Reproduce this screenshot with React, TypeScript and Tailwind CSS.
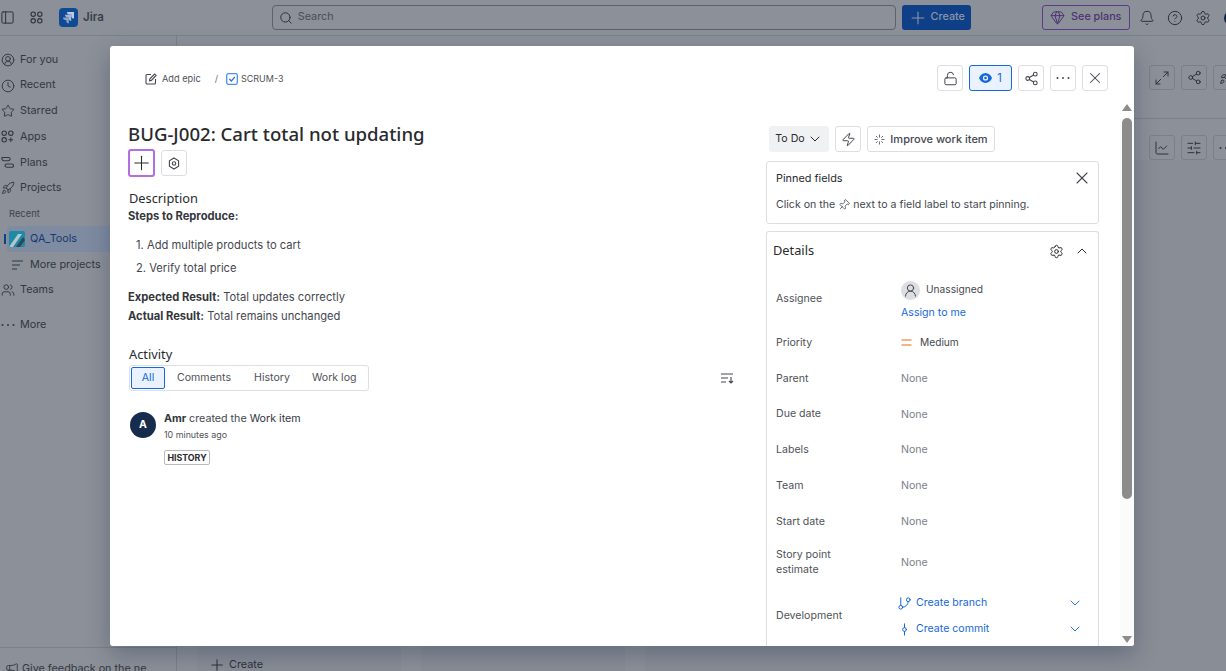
import {
  Bell,
  ChartLine,
  ChevronDown,
  ChevronUp,
  CircleHelp,
  CircleUserRound,
  Clock,
  Gem,
  GitBranch,
  GitCommitVertical,
  LockOpen,
  Maximize2,
  Megaphone,
  PanelLeft,
  Pin,
  Plus,
  Rocket,
  Search,
  Settings,
  Share2,
  SlidersHorizontal,
  Star,
  UserRound,
  Users,
  X,
  Zap,
} from "lucide-react";
import type { ReactNode } from "react";

function DotsIcon() {
  return (
    <svg width="14" height="4" viewBox="0 0 14 4" fill="currentColor">
      <circle cx="1.5" cy="2" r="1" />
      <circle cx="7" cy="2" r="1" />
      <circle cx="12.5" cy="2" r="1" />
    </svg>
  );
}

function AppsIcon({ plus }: { plus?: boolean }) {
  return (
    <svg width="13" height="13" viewBox="0 0 13 13" fill="none" stroke="currentColor" strokeWidth="1.1">
      <circle cx="3.2" cy="3.2" r="2.2" />
      <circle cx="9.8" cy="3.2" r="2.2" />
      <circle cx="3.2" cy="9.8" r="2.2" />
      {plus ? <path d="M9.8 7.5v4.6M7.5 9.8h4.6" /> : <circle cx="9.8" cy="9.8" r="2.2" />}
    </svg>
  );
}

function PlansIcon() {
  return (
    <svg width="13" height="13" viewBox="0 0 13 13" fill="none" stroke="currentColor" strokeWidth="1.1">
      <path d="M1 1.5h6.5a1.6 1.6 0 0 1 0 3.2H2.5A1.6 1.6 0 0 1 1 3.1z" />
      <rect x="4" y="8" width="8.5" height="3.2" rx="1.6" />
    </svg>
  );
}

function JiraLogo() {
  return (
    <div className="w-[19px] h-[19px] rounded-[4px] bg-[#0f4a94] flex items-center justify-center">
      <svg width="13" height="13" viewBox="0 0 13 13" fill="#c9d3e2">
        <path d="M5 1h7v6.5c-1.6 0-2.7-1-2.7-2.6V3.6H7.2C6 3.6 5 2.6 5 1z" opacity="0.95" />
        <path d="M3 3.8h6.2v6.3c-1.5 0-2.6-1-2.6-2.5V6.3H5C3.9 6.3 3 5.3 3 3.8z" opacity="0.8" />
        <path d="M1 6.6h5.8v6c-1.5 0-2.5-1.1-2.5-2.5V9H3.1C1.9 9 1 8 1 6.6z" opacity="0.65" />
      </svg>
    </div>
  );
}

function ProjectLogo() {
  return (
    <svg width="16" height="16" viewBox="0 0 16 16" className="rounded-[2px]">
      <rect width="16" height="16" fill="#1f8aa3" />
      <path d="M0 16 L9 3 L13 3 L4 16Z" fill="#b6c6cf" />
      <path d="M7 16 L14 6 L16 9 L11 16Z" fill="#274a5c" />
    </svg>
  );
}

function HexIcon() {
  return (
    <svg width="12" height="13" viewBox="0 0 12 13" fill="none" stroke="#44474f" strokeWidth="1.1">
      <path d="M6 1l4.6 2.7v5.6L6 12 1.4 9.3V3.7z" />
      <circle cx="6" cy="6.5" r="1.7" />
    </svg>
  );
}

function SparkIcon() {
  return (
    <svg width="11" height="11" viewBox="0 0 11 11" fill="none" stroke="#6b6e76" strokeWidth="1">
      <path d="M5.5.5v3M5.5 7.5v3M.5 5.5h3M7.5 5.5h3M2 2l1.7 1.7M7.3 7.3 9 9M9 2 7.3 3.7M3.7 7.3 2 9" />
    </svg>
  );
}

function EditIcon() {
  return (
    <svg width="12" height="12" viewBox="0 0 12 12" fill="none" stroke="#44474f" strokeWidth="1.1">
      <path d="M6 1.5H2a1 1 0 0 0-1 1V10a1 1 0 0 0 1 1h7.5a1 1 0 0 0 1-1V6" />
      <path d="M4.5 7.8l.4-2L9.6 1l1.5 1.5-4.7 4.9z" />
    </svg>
  );
}

function TaskIcon() {
  return (
    <svg width="12" height="12" viewBox="0 0 12 12" fill="none">
      <rect x="0.7" y="0.7" width="10.6" height="10.6" rx="1.5" stroke="#4c8df6" strokeWidth="1.3" />
      <path d="M3.3 6l2 2 3.5-4" stroke="#2f6fd8" strokeWidth="1.2" />
    </svg>
  );
}

function EyeFilled() {
  return (
    <svg width="13" height="10" viewBox="0 0 13 10">
      <path
        fillRule="evenodd"
        d="M6.5 0C9.5 0 12 2.2 13 5c-1 2.8-3.5 5-6.5 5S1 7.8 0 5c1-2.8 3.5-5 6.5-5zm0 2.4a2.6 2.6 0 1 0 0 5.2 2.6 2.6 0 0 0 0-5.2z"
        fill="#1868db"
      />
      <circle cx="6.5" cy="5" r="1.3" fill="#1868db" />
    </svg>
  );
}

function SortIcon() {
  return (
    <svg width="14" height="12" viewBox="0 0 14 12" fill="none" stroke="#44474f" strokeWidth="1.1">
      <path d="M1 2h12M1 6h7M1 10h5M11 5v6M9 9l2 2 2-2" />
    </svg>
  );
}

function NavItem({ icon, label }: { icon: ReactNode; label: string }) {
  return (
    <div className="h-[25.7px] flex items-center text-[#33373f]">
      <div className="w-[20px] pl-px shrink-0 flex">{icon}</div>
      <span className="text-[10.8px]">{label}</span>
    </div>
  );
}

function GhostButton({ children }: { children: ReactNode }) {
  return (
    <div className="w-[26px] h-[25px] shrink-0 rounded-[3px] border border-[#7b7f87] flex items-center justify-center text-[#2e323a]">
      {children}
    </div>
  );
}

function ToolButton({ children, className = "" }: { children: ReactNode; className?: string }) {
  return (
    <div className={`w-[26px] h-[26px] rounded-[3px] border border-[#dddee1] flex items-center justify-center text-[#44474f] ${className}`}>
      {children}
    </div>
  );
}

function FieldRow({ label, height, children }: { label: ReactNode; height: string; children: ReactNode }) {
  return (
    <div className={`flex items-center ${height}`}>
      <div className="w-[125px] shrink-0 pb-[2px] text-[#505258] leading-[15px]">{label}</div>
      <div className="flex-1 min-w-0">{children}</div>
    </div>
  );
}

function NoneRow({ label, height }: { label: ReactNode; height: string }) {
  return (
    <FieldRow label={label} height={height}>
      <span className="text-[#7d818a]">None</span>
    </FieldRow>
  );
}

function TopHeader() {
  return (
    <header className="h-[36px] shrink-0 border-b border-[#7c8088] flex items-center text-[#2e323a] [&>*]:shrink-0">
      <PanelLeft size={15} strokeWidth={1.6} />
      <div className="ml-[15px]">
        <AppsIcon />
      </div>
      <div className="ml-[16px]">
        <JiraLogo />
      </div>
      <span className="ml-[5px] text-[11.5px] font-semibold text-[#3a3e47]">Jira</span>
      <div className="ml-[168px] w-[624px] h-[25px] rounded-[4px] border border-[#5d616a] flex items-center gap-[5px] px-[6px]">
        <Search size={14} strokeWidth={1.7} />
        <span className="text-[10.8px] text-[#4a4e57]">Search</span>
      </div>
      <div className="ml-[6px] w-[69px] h-[25px] rounded-[3px] bg-[#0f3f87] flex items-center justify-center gap-[3px] text-[#8d97a8]">
        <Plus size={20} strokeWidth={1.3} />
        <span className="text-[10.8px] font-medium">Create</span>
      </div>
      <div className="ml-[71px] w-[88px] h-[25px] rounded-[3px] border border-[#5e3a8c] flex items-center justify-center gap-[6px] text-[#4d3274]">
        <Gem size={15} strokeWidth={1.6} />
        <span className="text-[10.8px] font-medium">See plans</span>
      </div>
      <Bell size={16} strokeWidth={1.5} className="ml-[9px]" />
      <CircleHelp size={16} strokeWidth={1.5} className="ml-[12px]" />
      <Settings size={16} strokeWidth={1.5} className="ml-[12px]" />
      <div className="ml-[13px] w-[16px] h-[16px] rounded-full bg-[#0f2440]" />
    </header>
  );
}

function Sidebar() {
  return (
    <aside className="w-[177px] shrink-0 border-r border-[#7c8088] flex flex-col">
      <div className="flex-1 pt-[11px]">
        <NavItem icon={<CircleUserRound size={14} strokeWidth={1.6} />} label="For you" />
        <NavItem icon={<Clock size={14} strokeWidth={1.6} />} label="Recent" />
        <NavItem icon={<Star size={14} strokeWidth={1.6} />} label="Starred" />
        <NavItem icon={<AppsIcon plus />} label="Apps" />
        <NavItem icon={<PlansIcon />} label="Plans" />
        <NavItem icon={<Rocket size={14} strokeWidth={1.6} />} label="Projects" />
        <div className="h-[25px] flex items-center pl-[9px] text-[9.4px] text-[#3f434c]">Recent</div>
        <div className="h-[26px] flex items-center">
          <div className="w-[2px] h-[10px] ml-[4px] bg-[#0f3f87]" />
          <div className="flex-1 h-[26px] ml-px rounded-[3px] bg-[#7f8ba0] flex items-center pl-[2px]">
            <ProjectLogo />
            <span className="ml-[5px] text-[10.8px] text-[#163a72]">QA_Tools</span>
          </div>
        </div>
        <div className="h-[25px] flex items-center pl-[11px] text-[#33373f]">
          <svg width="12" height="10" viewBox="0 0 12 10" stroke="currentColor" strokeWidth="1.1">
            <path d="M1 1h11M1 5h8M1 9h5" />
          </svg>
          <span className="ml-[7px] text-[10.8px]">More projects</span>
        </div>
        <NavItem icon={<Users size={14} strokeWidth={1.6} />} label="Teams" />
        <div className="h-[9px]" />
        <NavItem icon={<DotsIcon />} label="More" />
      </div>
      <div className="h-[24px] shrink-0 border-t border-[#7c8088] flex items-start pt-[14px] pl-[5px] text-[#33373f]">
        <Megaphone size={14} strokeWidth={1.5} />
        <span className="ml-[3px] text-[10.8px] leading-[14px] whitespace-nowrap">Give feedback on the ne</span>
      </div>
    </aside>
  );
}

function BackgroundMain() {
  return (
    <main className="flex-1 min-w-0 flex flex-col text-[#2e323a]">
      <div className="h-[83px] shrink-0 border-b border-[#7c8088] flex items-start justify-end gap-[6px] pt-[29px] -mr-[13px]">
        <GhostButton>
          <Maximize2 size={16} strokeWidth={1.5} />
        </GhostButton>
        <GhostButton>
          <Share2 size={15} strokeWidth={1.6} />
        </GhostButton>
        <GhostButton>
          <Rocket size={15} strokeWidth={1.6} />
        </GhostButton>
      </div>
      <div className="h-[41px] shrink-0 flex items-end justify-end gap-[6px] -mr-[13px]">
        <GhostButton>
          <ChartLine size={16} strokeWidth={1.5} />
        </GhostButton>
        <GhostButton>
          <SlidersHorizontal size={16} strokeWidth={1.5} />
        </GhostButton>
        <GhostButton>
          <DotsIcon />
        </GhostButton>
      </div>
      <div className="flex-1 min-h-0 flex gap-[20px] pl-[20px]">
        <div className="w-[204px] flex flex-col justify-end bg-[#898d95] pl-[11px] -mb-[3px]">
          <div className="flex items-center gap-[3px] text-[#2e323a]">
            <Plus size={18} strokeWidth={1.4} />
            <span className="text-[10.8px]">Create</span>
          </div>
        </div>
        <div className="w-[204px] bg-[#898d95]" />
        <div className="flex-1 bg-[#898d95]" />
      </div>
    </main>
  );
}

function LeftColumn() {
  return (
    <div className="flex-1 min-w-0 pl-[18px] pt-[3px] text-[11.2px] text-[#44474f]">
      <h1 className="font-['Noto_Sans',sans-serif] text-[18.6px] leading-[26px] font-medium text-[#292a2e]">
        BUG-J002: Cart total not updating
      </h1>
      <div className="mt-[2px] flex items-center gap-[6px]">
        <div className="w-[27px] h-[28px] rounded-[3px] border-2 border-[#b36fe0] flex items-center justify-center">
          <Plus size={24} strokeWidth={1.1} className="text-[#292a2e]" />
        </div>
        <ToolButton className="w-[25px]">
          <HexIcon />
        </ToolButton>
      </div>
      <h2 className="mt-[12px] pl-px font-['Noto_Sans',sans-serif] text-[12.8px] leading-[18px] text-[#292a2e]">
        Description
      </h2>
      <p className="font-bold leading-[18px] text-[#33363c]">Steps to Reproduce:</p>
      <ol className="mt-[9px]">
        <li className="h-[23px] flex items-center pl-[8px]">1. Add multiple products to cart</li>
        <li className="h-[23px] flex items-center pl-[8px]">2. Verify total price</li>
      </ol>
      <p className="mt-[8px] leading-[19px]">
        <strong className="font-bold text-[#33363c]">Expected Result:</strong> Total updates correctly
      </p>
      <p className="leading-[19px]">
        <strong className="font-bold text-[#33363c]">Actual Result:</strong> Total remains unchanged
      </p>
      <h2 className="mt-[20px] pl-px font-['Noto_Sans',sans-serif] text-[12.8px] leading-[16px] text-[#292a2e]">
        Activity
      </h2>
      <div className="mt-[3px] flex items-center justify-between pr-[9px]">
        <div className="ml-px h-[26px] w-[240px] rounded-[3px] border border-[#dddee1] flex items-center px-px text-[10.6px] text-[#505258]">
          <div className="w-[34px] h-[22px] rounded-[2px] border border-[#1868db] bg-[#e9f2fe] text-[#1868db] flex items-center justify-center">
            All
          </div>
          <span className="ml-[12px]">Comments</span>
          <span className="ml-[23px]">History</span>
          <span className="ml-[22px]">Work log</span>
        </div>
        <SortIcon />
      </div>
      <div className="mt-[20px] ml-[2px] flex">
        <div className="w-[26px] h-[26px] mt-px rounded-full bg-[#172b4d] flex items-center justify-center text-white text-[10.5px] font-bold">
          A
        </div>
        <div className="ml-[8px]">
          <p className="text-[10.7px] leading-[16px] text-[#44474f]">
            <strong className="font-bold text-[#33363c]">Amr</strong> created the <span className="text-[#33363c]">Work item</span>
          </p>
          <p className="text-[8.9px] leading-[16px] text-[#505258]">10 minutes ago</p>
          <div className="mt-[7px] w-[46px] h-[15px] rounded-[2px] border border-[#b7b9be] flex items-center justify-center text-[8.8px] font-bold text-[#292a2e]">
            HISTORY
          </div>
        </div>
      </div>
    </div>
  );
}

function RightColumn() {
  return (
    <div className="w-[333px] shrink-0 pt-[8px] text-[10.6px] text-[#44474f]">
      <div className="ml-[3px] flex items-center gap-[6px] h-[26px]">
        <div className="w-[60px] h-[26px] rounded-[3px] bg-[#f0f1f2] flex items-center justify-center gap-[2px] text-[#292a2e]">
          To Do
          <ChevronDown size={16} strokeWidth={1.5} />
        </div>
        <ToolButton>
          <Zap size={15} strokeWidth={1.6} />
        </ToolButton>
        <div className="h-[26px] w-[128px] rounded-[3px] border border-[#dddee1] flex items-center justify-center gap-[5px] text-[11px] font-medium">
          <SparkIcon />
          Improve work item
        </div>
      </div>
      <section className="mt-[9px] h-[63px] rounded-[3px] border border-[#dddee1] pl-[9px] pr-[9px] pt-[6px]">
        <div className="flex items-center justify-between h-[20px]">
          <span className="text-[10.9px] text-[#292a2e]">Pinned fields</span>
          <X size={20} strokeWidth={1.3} className="-mr-[3px]" />
        </div>
        <p className="mt-[9px] leading-[16px] flex items-center">
          Click on the
          <Pin size={12} strokeWidth={1.6} className="mx-[3px] rotate-45" />
          next to a field label to start pinning.
        </p>
      </section>
      <section className="mt-[7px] rounded-t-[3px] border border-b-0 border-[#dddee1] pl-[9px] pr-[10px] h-[430px]">
        <div className="h-[36px] pt-[2px] flex items-center justify-between">
          <span className="-ml-[3px] font-['Noto_Sans',sans-serif] text-[12.8px] text-[#292a2e]">Details</span>
          <div className="flex items-center gap-[10px] -mr-[2px] text-[#292a2e]">
            <Settings size={15} strokeWidth={1.6} />
            <ChevronUp size={16} strokeWidth={1.5} />
          </div>
        </div>
        <div className="mt-[7px]">
          <FieldRow label={<span className="block pb-[2px]">Assignee</span>} height="h-[50px]">
            <div className="flex items-center gap-[6px] h-[22px] text-[10.2px]">
              <div className="w-[19px] h-[19px] rounded-full bg-[#dddee1] flex items-center justify-center">
                <UserRound size={15} strokeWidth={1.6} className="text-[#44474f]" />
              </div>
              Unassigned
            </div>
            <p className="mt-[4px] text-[#1868db]">Assign to me</p>
          </FieldRow>
          <FieldRow label="Priority" height="h-[36px]">
            <div className="flex items-center gap-[8px] text-[10.2px]">
              <svg width="11" height="7" viewBox="0 0 11 7" stroke="#e56910" strokeWidth="1.2">
                <path d="M.5 1h10M.5 6h10" />
              </svg>
              Medium
            </div>
          </FieldRow>
          <NoneRow label="Parent" height="h-[36px]" />
          <NoneRow label="Due date" height="h-[35px]" />
          <NoneRow label="Labels" height="h-[36px]" />
          <NoneRow label="Team" height="h-[36px]" />
          <NoneRow label="Start date" height="h-[36px]" />
          <NoneRow
            label={
              <>
                Story point
                <br />
                estimate
              </>
            }
            height="h-[46px]"
          />
          <FieldRow label="Development" height="h-[60px]">
            <div className="flex items-center h-[26px] text-[#1868db]">
              <GitBranch size={15} strokeWidth={1.6} className="-ml-[4px]" />
              <span className="ml-[4px] flex-1">Create branch</span>
              <ChevronDown size={16} strokeWidth={1.4} className="mr-[5px]" />
            </div>
            <div className="flex items-center h-[26px] text-[#1868db]">
              <GitCommitVertical size={15} strokeWidth={1.6} className="-ml-[4px]" />
              <span className="ml-[4px] flex-1">Create commit</span>
              <ChevronDown size={16} strokeWidth={1.4} className="mr-[5px]" />
            </div>
          </FieldRow>
        </div>
      </section>
    </div>
  );
}

function IssueModal() {
  return (
    <div className="absolute left-[110px] top-[46px] w-[1024px] h-[600px] bg-white rounded-[3px] overflow-hidden shadow-[0_8px_24px_rgba(9,30,66,0.3)] flex flex-col">
      <div className="h-[72px] shrink-0 pt-[19px] pr-[26px] flex items-start justify-between">
        <div className="ml-[35px] h-[28px] flex items-center text-[9.2px] text-[#505258]">
          <EditIcon />
          <span className="ml-[5px]">Add epic</span>
          <span className="ml-[14px] mr-[8px] text-[#6b6e76]">/</span>
          <TaskIcon />
          <span className="ml-[3px] text-[9px]">SCRUM-3</span>
        </div>
        <div className="flex items-center gap-[6px] text-[#292a2e]">
          <ToolButton>
            <LockOpen size={15} strokeWidth={1.6} />
          </ToolButton>
          <div className="w-[43px] h-[26px] rounded-[3px] border border-[#1868db] bg-[#e9f2fe] flex items-center justify-center gap-[5px] text-[11.2px] text-[#1868db]">
            <EyeFilled />1
          </div>
          <ToolButton className="text-[#292a2e]">
            <Share2 size={15} strokeWidth={1.7} />
          </ToolButton>
          <ToolButton>
            <DotsIcon />
          </ToolButton>
          <ToolButton>
            <X size={18} strokeWidth={1.4} />
          </ToolButton>
        </div>
      </div>
      <div className="flex-1 min-h-0 flex">
        <div className="flex-1 min-w-0 flex">
          <LeftColumn />
          <div className="w-[23px] shrink-0" />
          <div className="pr-[21px]">
            <RightColumn />
          </div>
        </div>
        <div className="w-[14px] shrink-0 bg-[#fbfbfb] relative">
          <div className="absolute left-[2px] -top-[14px] w-0 h-0 border-x-[5px] border-x-transparent border-b-[7px] border-b-[#8c8c8c]" />
          <div className="absolute left-[2px] top-0 w-[10px] h-[381px] rounded-[5px] bg-[#8c8c8c]" />
          <div className="absolute left-[2px] bottom-[3px] w-0 h-0 border-x-[5px] border-x-transparent border-t-[7px] border-t-[#8c8c8c]" />
        </div>
      </div>
    </div>
  );
}

export default function App() {
  return (
    <div className="relative w-[1226px] h-[671px] overflow-hidden bg-[#8c9098] font-[Inter,sans-serif] flex flex-col">
      <TopHeader />
      <div className="flex-1 min-h-0 flex">
        <Sidebar />
        <BackgroundMain />
      </div>
      <IssueModal />
    </div>
  );
}
